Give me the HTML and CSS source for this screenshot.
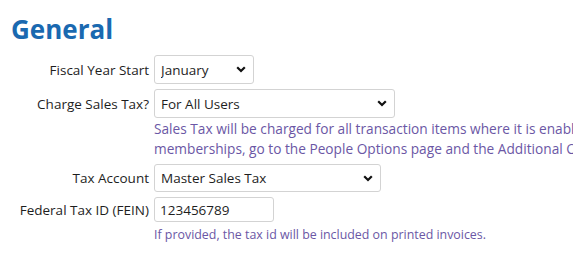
FILE: index.html
```html
<!DOCTYPE html>
<html lang="en">
<head>
    <meta charset="UTF-8">
    <meta name="viewport" content="width=device-width, initial-scale=1.0">
    <title>General Settings</title>
    <link rel="stylesheet" href="styles.css">
</head>
<body>

    <h1 class="section-title">General</h1>

    <!-- General settings form -->
    <form class="settings-form">
        <label class="field-label" for="fiscal-start">Fiscal Year Start</label>
        <div class="field">
            <select id="fiscal-start" class="select select-month">
                <option>January</option>
                <option>February</option>
                <option>March</option>
            </select>
        </div>

        <label class="field-label" for="charge-tax">Charge Sales Tax?</label>
        <div class="field">
            <select id="charge-tax" class="select select-tax">
                <option>For All Users</option>
                <option>Never</option>
            </select>
        </div>

        <div class="field-spacer"></div>
        <p class="help">Sales Tax will be charged for all transaction items where it is enabled. To enable sales tax for<br>memberships, go to the People Options page and the Additional Options tab.</p>

        <label class="field-label" for="tax-account">Tax Account</label>
        <div class="field">
            <select id="tax-account" class="select select-account">
                <option>Master Sales Tax</option>
            </select>
        </div>

        <label class="field-label" for="fein">Federal Tax ID (FEIN)</label>
        <div class="field">
            <input type="text" id="fein" class="text-input" value="123456789">
        </div>

        <div class="field-spacer"></div>
        <p class="help help-small">If provided, the tax id will be included on printed invoices.</p>
    </form>

</body>
</html>
```

FILE: styles.css
```css
body {
    font-family: "Open Sans", "Noto Sans", Arial, sans-serif;
    margin: 0;
    padding: 0 0 0 11px;
    background-color: #fff;
    color: #1e1e1e;
    overflow: hidden;
}
.section-title {
    font-size: 26px;
    font-weight: 700;
    color: #1a69b0;
    margin: 12px 0 9px 0;
    line-height: 34px;
}
.settings-form {
    display: grid;
    grid-template-columns: 138px auto;
    column-gap: 5px;
    row-gap: 5px;
    align-items: center;
    font-size: 13.5px;
}
.field-label {
    text-align: right;
    white-space: nowrap;
    justify-self: end;
}
.field {
    display: flex;
}
.select {
    font-family: inherit;
    font-size: 13.5px;
    color: #1e1e1e;
    height: 29px;
    padding: 0 24px 0 6px;
    border: 1px solid #d3d3d3;
    border-radius: 3px;
    background-color: #fff;
    appearance: none;
    -webkit-appearance: none;
    background-image: url("data:image/svg+xml,%3Csvg xmlns='http://www.w3.org/2000/svg' width='10' height='7' viewBox='0 0 10 7'%3E%3Cpath d='M1.2 1.2 L5 5 L8.8 1.2' fill='none' stroke='%23111' stroke-width='2.2'/%3E%3C/svg%3E");
    background-repeat: no-repeat;
    background-position: right 7px center;
}
.select-month {
    width: 100px;
}
.select-tax {
    width: 241px;
}
.select-account {
    width: 227px;
    height: 28px;
}
.text-input {
    font-family: inherit;
    font-size: 13.5px;
    color: #1e1e1e;
    width: 120px;
    height: 25px;
    box-sizing: border-box;
    padding: 0 5px;
    border: 1px solid #d3d3d3;
    border-radius: 3px;
}
.help {
    margin: -4px 0 0 0;
    color: #6b57a5;
    font-size: 13.7px;
    line-height: 20px;
    white-space: nowrap;
}
.help-small {
    font-size: 12.4px;
    line-height: 16px;
    margin-top: 0;
}
```
